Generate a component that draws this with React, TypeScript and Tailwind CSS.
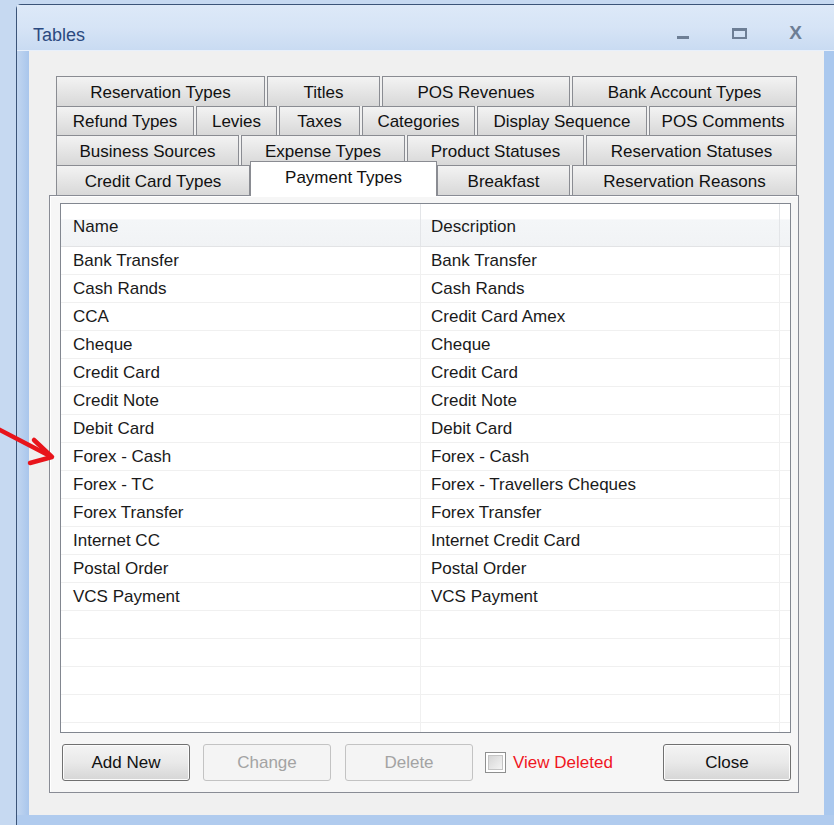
import React from "react";

const FONT = { fontFamily: '"Liberation Sans", Arial, sans-serif' };

type Tab = { label: string; w: number };

const tabRows: { tabs: Tab[]; h: number }[] = [
  {
    h: 30,
    tabs: [
      { label: "Reservation Types", w: 209 },
      { label: "Titles", w: 113 },
      { label: "POS Revenues", w: 188 },
      { label: "Bank Account Types", w: 225 },
    ],
  },
  {
    h: 29,
    tabs: [
      { label: "Refund Types", w: 138 },
      { label: "Levies", w: 81 },
      { label: "Taxes", w: 81 },
      { label: "Categories", w: 113 },
      { label: "Display Sequence", w: 170 },
      { label: "POS Comments", w: 148 },
    ],
  },
  {
    h: 30,
    tabs: [
      { label: "Business Sources", w: 183 },
      { label: "Expense Types", w: 164 },
      { label: "Product Statuses", w: 177 },
      { label: "Reservation Statuses", w: 211 },
    ],
  },
];

const rows: [string, string][] = [
  ["Bank Transfer", "Bank Transfer"],
  ["Cash Rands", "Cash Rands"],
  ["CCA", "Credit Card Amex"],
  ["Cheque", "Cheque"],
  ["Credit Card", "Credit Card"],
  ["Credit Note", "Credit Note"],
  ["Debit Card", "Debit Card"],
  ["Forex - Cash", "Forex - Cash"],
  ["Forex - TC", "Forex - Travellers Cheques"],
  ["Forex Transfer", "Forex Transfer"],
  ["Internet CC", "Internet Credit Card"],
  ["Postal Order", "Postal Order"],
  ["VCS Payment", "VCS Payment"],
  ["", ""],
  ["", ""],
  ["", ""],
  ["", ""],
  ["", ""],
];

function TabButton({ label, w, h }: { label: string; w: number; h: number }) {
  return (
    <div
      className="flex shrink-0 items-center justify-center border border-b-0 border-[#8a8c92] bg-gradient-to-b from-[#f3f3f3] to-[#d8d8d8] pt-[1px] text-[17px] text-[#111] leading-none"
      style={{ width: w, height: h }}
    >
      {label}
    </div>
  );
}

function Button({ label, disabled }: { label: string; disabled?: boolean }) {
  return (
    <div
      className={
        disabled
          ? "flex h-[37px] w-[128px] items-center justify-center rounded-[3px] border border-[#c3c3c3] bg-[#f4f4f4] text-[17px] text-[#a3a3a3]"
          : "flex h-[37px] w-[128px] items-center justify-center rounded-[3px] border border-[#707070] bg-gradient-to-b from-[#f4f4f4] via-[#e9e9e9] to-[#d6d6d6] text-[17px] text-[#111] shadow-[inset_0_0_0_1px_#fcfcfc]"
      }
    >
      {label}
    </div>
  );
}

export default function App() {
  return (
    <div className="relative h-[825px] w-[834px] overflow-hidden bg-[#c6d9f1] pl-[16px] pt-[4px]" style={FONT}>
      {/* window */}
      <div className="flex h-[821px] flex-col rounded-tl-[5px] border-l border-t border-[#3b5478] bg-[#b3cdef]">
        {/* title bar */}
        <div className="flex h-[46px] items-start bg-gradient-to-b from-[#dde9f8] via-[#d6e4f6] to-[#c9dbf2] pl-[16px] pt-[19px]">
          <span className="text-[18px] leading-[22px] text-[#2b4a80]">Tables</span>
          <div className="ml-auto flex items-start">
            <div className="mt-[12px] mr-[43px] h-[3px] w-[12px] bg-[#6d7e95]" />
            <div className="mt-[4px] mr-[42px] h-[11px] w-[15px] border-2 border-t-[3px] border-[#6d7e95]" />
            <span className="mr-[32px] mt-[-1px] text-[19px] font-bold leading-[20px] text-[#6d7e95]">X</span>
          </div>
        </div>
        <div className="h-[1px] bg-[#e8f0fb]" />
        {/* frame + client */}
        <div className="flex flex-1">
          <div className="w-[12px] bg-gradient-to-r from-[#c2d6f0] to-[#a9c6ec]" />
          <div className="flex h-[764px] flex-1 flex-col bg-[#f0f0f0] pl-[20px] pr-[25px] pt-[25px]">
            {/* tab strip */}
            <div className="flex flex-col pl-[7px] pr-[2px]">
              {tabRows.map((r, i) => (
                <div key={i} className="flex gap-[2px]">
                  {r.tabs.map((t) => (
                    <TabButton key={t.label} label={t.label} w={t.w} h={r.h} />
                  ))}
                </div>
              ))}
              <div className="relative z-10 flex h-[30px] items-start">
                <TabButton label="Credit Card Types" w={194} h={30} />
                <div className="-mt-[4px] flex h-[35px] w-[187px] shrink-0 items-start justify-center border border-b-0 border-[#8a8c92] bg-white pt-[7px] text-[17px] leading-none text-[#111]">
                  Payment Types
                </div>
                <TabButton label="Breakfast" w={133} h={30} />
                <div className="w-[2px] shrink-0" />
                <TabButton label="Reservation Reasons" w={225} h={30} />
              </div>
            </div>
            {/* tab page */}
            <div className="flex h-[598px] flex-col border border-[#898c95] bg-[#f6f6f6] pl-[10px] pr-[7px] pt-[7px] shadow-[inset_1px_1px_0_#ffffff]">
              {/* list view */}
              <div className="h-[530px] overflow-hidden border border-[#828790] bg-white">
                <div className="flex h-[43px] border-b border-[#e2e3e5] bg-[linear-gradient(#ffffff_0%,#ffffff_35%,#f4f6f8_38%,#f1f3f5_100%)] text-[17px] text-[#1a1a1a]">
                  <div className="flex w-[360px] items-center border-r border-[#e3e5e8] pl-[12px] pt-[2px]">Name</div>
                  <div className="flex w-[359px] items-center border-r border-[#e3e5e8] pl-[10px] pt-[2px]">Description</div>
                  <div className="flex-1" />
                </div>
                {rows.map(([n, d], i) => (
                  <div key={i} className="flex h-[28px] border-b border-[#f0f0f0] text-[17px] text-[#1a1a1a]">
                    <div className="flex w-[360px] items-center border-r border-[#f0f0f0] pl-[12px]">{n}</div>
                    <div className="flex w-[359px] items-center border-r border-[#f0f0f0] pl-[10px]">{d}</div>
                    <div className="flex-1" />
                  </div>
                ))}
              </div>
              {/* buttons */}
              <div className="mt-[11px] flex items-center pl-[2px]">
                <Button label="Add New" />
                <div className="w-[13px]" />
                <Button label="Change" disabled />
                <div className="w-[14px]" />
                <Button label="Delete" disabled />
                <div className="ml-[12px] flex h-[21px] w-[21px] items-center justify-center border border-[#8e8f8f] bg-white">
                  <div className="h-[15px] w-[15px] border border-[#c4c4c4] bg-gradient-to-br from-[#d6d6d6] to-[#f4f4f4]" />
                </div>
                <span className="ml-[7px] text-[17px] text-[#f0161e]">View Deleted</span>
                <div className="flex-1" />
                <Button label="Close" />
              </div>
            </div>
          </div>
          <div className="w-[10px] bg-[#aac8ee]" />
        </div>
        <div className="h-[10px] bg-[#b0cbee]" />
      </div>

      {/* annotation arrow */}
      <svg className="absolute left-0 top-0" width="834" height="825" viewBox="0 0 834 825">
        <g stroke="#e8141b" strokeWidth="4.5" strokeLinecap="round" strokeLinejoin="round" fill="none">
          <line x1="-4" y1="428" x2="50" y2="456" />
          <polyline points="34,440 52,457 30,463" />
        </g>
      </svg>
    </div>
  );
}
